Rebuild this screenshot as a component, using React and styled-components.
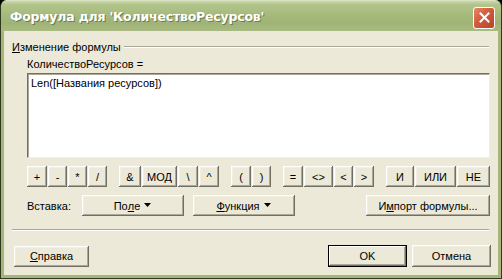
import React from 'react'
import styled, { createGlobalStyle } from 'styled-components'

const GlobalStyle = createGlobalStyle`
  html, body { margin: 0; padding: 0; background: #000; }
  body { font-family: 'Liberation Sans', Arial, sans-serif; font-size: 11px; color: #000; }
`

const operators = [
  [['+', 20], ['-', 19], ['*', 19], ['/', 19]],
  [['&', 22], ['МОД', 35], ['\\', 20], ['^', 20]],
  [['(', 20], [')', 19]],
  [['=', 20], ['<>', 29], ['<', 19], ['>', 20]],
  [['И', 28], ['ИЛИ', 41], ['НЕ', 33]],
]

const App = () => {
  return (
    <>
      <GlobalStyle />
      <Window>
        <TitleBar>
          <Title>Формула для 'КоличествоРесурсов'</Title>
          <CloseButton>
            <svg width="11" height="11" viewBox="0 0 11 11">
              <path d="M1.5 1.5 L9.5 9.5 M9.5 1.5 L1.5 9.5" stroke="#fff" strokeWidth="2" strokeLinecap="square" />
            </svg>
          </CloseButton>
        </TitleBar>
        <Body>
          <GroupHeader>
            <span><u>И</u>зменение формулы</span>
            <GroupLine />
          </GroupHeader>
          <Indented>
            <FieldLabel>КоличествоРесурсов =</FieldLabel>
            <Editor>Len([Названия ресурсов])</Editor>
            <OpRow>
              {operators.map((group, gi) => (
                <OpGroup key={gi}>
                  {group.map(([t, w]) => (
                    <OpButton key={t} $w={w}>{t}</OpButton>
                  ))}
                </OpGroup>
              ))}
            </OpRow>
            <InsertRow>
              <InsertLabel>Вставка:</InsertLabel>
              <Button $w={102} $ml={15}>
                По<u>л</u>е <Arrow />
              </Button>
              <Button $w={102} $ml={9}>
                <u>Ф</u>ункция <Arrow />
              </Button>
              <Spacer />
              <Button $w={124}>
                И<u>м</u>порт формулы...
              </Button>
            </InsertRow>
          </Indented>
          <Separator />
          <Footer>
            <Button $w={75} $h={21}><u>С</u>правка</Button>
            <Spacer />
            <Button $w={79} $h={22} $default>OK</Button>
            <Button $w={79} $h={22} $ml={5}>Отмена</Button>
          </Footer>
        </Body>
      </Window>
    </>
  )
}

const Arrow = () => (
  <svg width="8" height="5" viewBox="0 0 8 5" style={{ marginLeft: 4 }}>
    <path d="M0 0 H7 L3.5 4 Z" fill="#000" />
  </svg>
)

const Window = styled.div`
  width: 502px;
  height: 279px;
  box-sizing: border-box;
  display: flex;
  flex-direction: column;
  background: #a4b67c;
  border: 1px solid #2f3a1c;
  border-top: none;
  border-radius: 7px 7px 0 0;
  overflow: hidden;
`

const TitleBar = styled.div`
  height: 30px;
  flex: none;
  display: flex;
  align-items: center;
  padding: 0 6px 0 9px;
  background: linear-gradient(to bottom, #cbd9ab 0%, #b2c48a 12%, #a7ba7e 45%, #a0b377 75%, #a9bb82 100%);
  border-top: 1px solid #d9e3c2;
`

const Title = styled.div`
  flex: 1;
  color: #fff;
  font-family: 'DejaVu Sans', Verdana, sans-serif;
  font-weight: bold;
  font-size: 12.5px;
  letter-spacing: -0.2px;
  text-shadow: 1px 1px 0 #6c7d4c;
  padding-top: 1px;
`

const CloseButton = styled.div`
  width: 20px;
  height: 20px;
  margin-top: 3px;
  border: 1px solid #fff;
  border-radius: 3px;
  background: linear-gradient(135deg, #e8886a 0%, #d25a3a 45%, #b9432a 100%);
  display: flex;
  align-items: center;
  justify-content: center;
`

const Body = styled.div`
  flex: 1;
  margin: 0 3px 3px 3px;
  background: #ece9d8;
  display: flex;
  flex-direction: column;
  padding: 0 7px 0 8px;
`

const GroupHeader = styled.div`
  display: flex;
  align-items: center;
  margin-top: 9px;
  height: 14px;
  gap: 3px;
`

const GroupLine = styled.div`
  flex: 1;
  height: 0;
  border-top: 1px solid #aca899;
  border-bottom: 1px solid #fff;
  margin-right: 2px;
`

const Indented = styled.div`
  padding-left: 15px;
  display: flex;
  flex-direction: column;
`

const FieldLabel = styled.div`
  margin-top: 4px;
  height: 13px;
  line-height: 13px;
`

const Editor = styled.div`
  margin-top: 2px;
  height: 85px;
  box-sizing: border-box;
  background: #fff;
  border-top: 1px solid #716f64;
  border-left: 1px solid #716f64;
  border-right: 1px solid #f1efe2;
  border-bottom: 1px solid #f1efe2;
  box-shadow: inset 1px 1px 0 #aca899;
  padding: 3px 3px;
  margin-right: 1px;
`

const OpRow = styled.div`
  display: flex;
  margin-top: 8px;
  justify-content: space-between;
  margin-right: 1px;
`

const OpGroup = styled.div`
  display: flex;
  gap: 1px;
`

const buttonFace = `
  background: #ece9d8;
  box-sizing: border-box;
  box-shadow: inset -1px -1px 0 #716f64, inset 1px 1px 0 #fff, inset -2px -2px 0 #aca899, inset 2px 2px 0 #f1efe2;
  display: flex;
  align-items: center;
  justify-content: center;
  font-family: 'Liberation Sans', Arial, sans-serif;
  font-size: 11px;
  color: #000;
`

const OpButton = styled.div`
  ${buttonFace}
  width: ${p => p.$w}px;
  height: 21px;
`

const InsertRow = styled.div`
  display: flex;
  align-items: center;
  margin-top: 8px;
  height: 21px;
  margin-right: 1px;
`

const InsertLabel = styled.div`
  width: 40px;
`

const Button = styled.div`
  ${buttonFace}
  width: ${p => p.$w}px;
  height: ${p => p.$h || 21}px;
  margin-left: ${p => p.$ml || 0}px;
  ${p => p.$default && `
    outline: 1px solid #000;
    outline-offset: -1px;
    box-shadow: inset -2px -2px 0 #716f64, inset 2px 2px 0 #fff, inset -3px -3px 0 #aca899;
  `}
`

const Spacer = styled.div`
  flex: 1;
`

const Separator = styled.div`
  margin-top: 13px;
  margin-right: 2px;
  border-top: 1px solid #aca899;
  border-bottom: 1px solid #fff;
`

const Footer = styled.div`
  display: flex;
  align-items: center;
  margin-top: 14px;
  margin-left: 2px;
`

export default App
